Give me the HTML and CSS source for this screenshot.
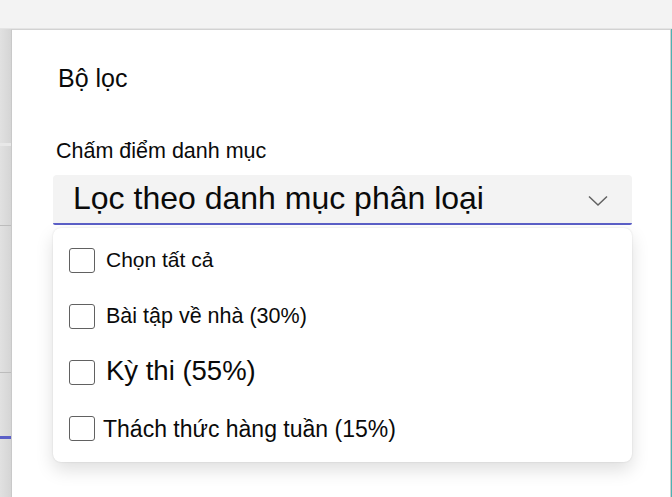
FILE: index.html
```html
<!DOCTYPE html>
<html lang="vi">
<head>
    <meta charset="UTF-8">
    <meta name="viewport" content="width=device-width, initial-scale=1.0">
    <title>Bộ lọc</title>
    <link rel="stylesheet" href="styles.css">
</head>
<body>

    <div class="top-bar"></div>

    <div class="main">
        <div class="side-strip">
            <div class="seg seg-a"></div>
            <div class="seg-band"></div>
            <div class="seg seg-b"></div>
            <div class="seg-line"></div>
            <div class="seg seg-c"></div>
            <div class="seg-line"></div>
            <div class="seg seg-d"></div>
            <div class="seg-blue"></div>
        </div>

        <div class="panel">
            <h2 class="panel-title">Bộ lọc</h2>

            <label class="field-label">Chấm điểm danh mục</label>

            <div class="dropdown">
                <span class="dropdown-text">Lọc theo danh mục phân loại</span>
                <svg class="chevron" width="20" height="12" viewBox="0 0 20 12">
                    <path d="M1 1.5 L10 10 L19 1.5" fill="none" stroke="#616161" stroke-width="1.5"/>
                </svg>
            </div>

            <div class="menu">
                <div class="menu-item size-sm">
                    <span class="check"></span>
                    <span class="item-text">Chọn tất cả</span>
                </div>
                <div class="menu-item size-md">
                    <span class="check"></span>
                    <span class="item-text">Bài tập về nhà (30%)</span>
                </div>
                <div class="menu-item size-lg">
                    <span class="check"></span>
                    <span class="item-text">Kỳ thi (55%)</span>
                </div>
                <div class="menu-item size-wide">
                    <span class="check"></span>
                    <span class="item-text">Thách thức hàng tuần (15%)</span>
                </div>
            </div>
        </div>

        <div class="right-edge"></div>
    </div>

</body>
</html>
```

FILE: styles.css
```css
body {
    font-family: 'Liberation Sans', Arial, sans-serif;
    background-color: #f3f3f3;
    color: #0a0a0a;
    margin: 0;
    height: 497px;
    overflow: hidden;
}

.top-bar {
    height: 28px;
    background-color: #f3f3f3;
    border-bottom: 1px solid #e4e4e4;
}

.main {
    display: flex;
    height: 468px;
}

.side-strip {
    width: 11px;
    background: linear-gradient(to right, #e1e1e1, #d5d5d5);
    display: flex;
    flex-direction: column;
}

.seg-a { height: 114px; }
.seg-band { height: 3px; background-color: #e8e8e8; }
.seg-b { height: 79px; }
.seg-line { height: 1px; background-color: #bcbcbc; }
.seg-c { height: 146px; }
.seg-d { height: 63px; }
.seg-blue { height: 3px; background-color: #5b5fc7; }

.panel {
    flex: 1;
    background-color: #fff;
    border-left: 1px solid #c9c9c9;
    border-top: 1px solid #d2d2d2;
    border-right: 1px solid #cfcfcf;
    padding: 33px 38px 0 41px;
}

.right-edge {
    width: 1px;
    background-color: #4bb3b3;
}

.panel-title {
    margin: 0 0 0 5px;
    font-size: 25px;
    font-weight: normal;
    line-height: 30px;
}

.field-label {
    display: block;
    margin-top: 46px;
    font-size: 21.5px;
    line-height: 25px;
    margin-left: 3px;
}

.dropdown {
    margin-top: 11px;
    height: 48px;
    background-color: #f3f3f3;
    border-bottom: 2px solid #5b5fc7;
    border-radius: 4px 4px 2px 2px;
    display: flex;
    align-items: center;
    justify-content: space-between;
    padding: 0 24px 0 20px;
}

.dropdown-text {
    font-size: 32px;
    line-height: 37px;
    margin-top: -1px;
}

.chevron {
    margin-top: 4px;
}

.menu {
    margin-top: 3px;
    background-color: #fff;
    border-radius: 8px;
    box-shadow: 0 8px 18px rgba(0, 0, 0, 0.13), 0 0 2px rgba(0, 0, 0, 0.12);
    padding: 20px 16px 21px 16px;
    display: flex;
    flex-direction: column;
    gap: 31px;
}

.menu-item {
    display: flex;
    align-items: center;
    height: 25px;
    gap: 11px;
}

.check {
    width: 24px;
    height: 23px;
    border: 1px solid #616161;
    border-radius: 3px;
    flex: none;
}

.size-sm .item-text { font-size: 21px; margin-top: -2px; }
.size-md .item-text { font-size: 21.5px; margin-top: 0; }
.size-lg .item-text { font-size: 27.5px; margin-top: -3px; }
.size-wide { gap: 8px; }
.size-wide .item-text { font-size: 23px; margin-top: 2px; }
```
